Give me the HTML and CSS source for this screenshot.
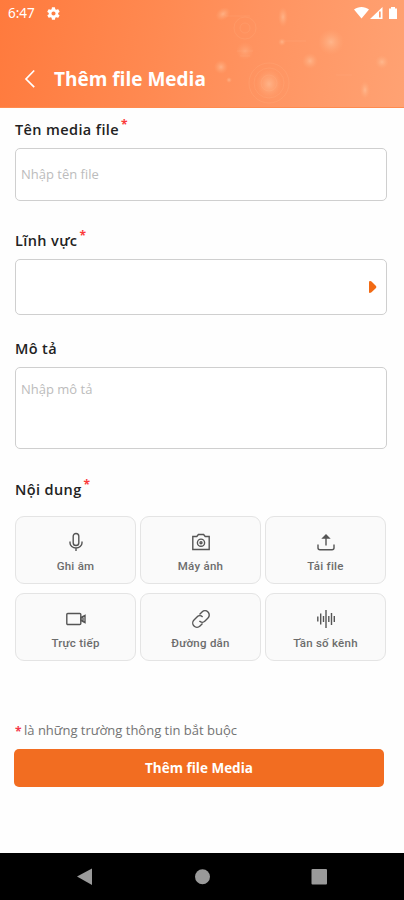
FILE: index.html
```
<!DOCTYPE html>
<html lang="vi">
<head>
<meta charset="utf-8">
<title>Thêm file Media</title>
<link rel="stylesheet" href="styles.css">
</head>
<body>
<div class="screen">
  <header class="header">
    <svg class="header-art" viewBox="0 0 404 108" aria-hidden="true">
      <defs>
        <radialGradient id="glow"><stop offset="0" stop-color="#ffd0ac" stop-opacity=".5"/><stop offset=".45" stop-color="#ffc096" stop-opacity=".3"/><stop offset="1" stop-color="#ffb080" stop-opacity="0"/></radialGradient>
      </defs>
      <g fill="url(#glow)">
        <ellipse cx="223" cy="14" rx="8" ry="6" transform="rotate(-35 223 14)"/>
        <ellipse cx="283" cy="17" rx="5" ry="10"/>
        <circle cx="331" cy="42" r="13"/>
        <circle cx="310" cy="61" r="8"/>
        <circle cx="221" cy="67" r="7"/>
        <circle cx="382" cy="62" r="7"/>
        <ellipse cx="365" cy="90" rx="5" ry="9"/>
        <ellipse cx="269" cy="84" rx="13" ry="15"/>
        <circle cx="245" cy="51" r="9" opacity=".6"/>
        <circle cx="229" cy="80" r="3"/>
        <circle cx="282" cy="42" r="4"/>
      </g>
      <g fill="none" stroke="#ffc095" stroke-opacity=".16">
        <circle cx="245" cy="28" r="5"/><circle cx="245" cy="28" r="11"/>
        <path d="M237 51h16M240 56h10"/>
        <circle cx="269" cy="83" r="15"/><circle cx="269" cy="83" r="20"/>
        <circle cx="269" cy="83" r="8"/>
        <path d="M225 16h25M281 41h25M336 75h16"/>
      </g>
    </svg>
    <div class="status">
      <span class="clock">6:47</span>
      <svg class="gear" viewBox="0 0 24 24" width="15" height="15"><path fill="#fff" fill-rule="evenodd" d="M19.4 13a7.6 7.6 0 0 0 0-2l2.1-1.6a.5.5 0 0 0 .1-.7l-2-3.4a.5.5 0 0 0-.6-.2l-2.5 1a7 7 0 0 0-1.7-1l-.4-2.6a.5.5 0 0 0-.5-.5h-4a.5.5 0 0 0-.5.5L9 5.100a7 7 0 0 0-1.700 1l-2.500-1a.5.5 0 0 0-.6.200l-2 3.400a.5.5 0 0 0 .1.700L4.500 11a7.600 7.600 0 0 0 0 2l-2.200 1.600a.5.5 0 0 0-.1.700l2 3.400c.1.200.4.300.6.200l2.500-1a7 7 0 0 0 1.700 1l.4 2.600c0 .3.200.5.5.5h4c.3 0 .5-.2.500-.5l.4-2.600a7 7 0 0 0 1.700-1l2.500 1c.2.100.5 0 .6-.2l2-3.400a.5.5 0 0 0-.1-.7zM12 15.300a3.300 3.300 0 1 1 0-6.600 3.300 3.300 0 0 1 0 6.600z"/></svg>
      <svg class="signals" viewBox="0 0 46 16" width="46" height="16"><path fill="#fff" d="M0 4.500C4 1 11 1 15 4.500L7.500 13.500zM28.500 2v12H16zM35 3.500h2V2h4v1.500h2V14h-8z"/><path fill="#ff9868" d="M25 6.500h1.700v6H25z"/></svg>
    </div>
    <div class="title-row">
      <svg viewBox="0 0 12 20" width="12" height="20"><path d="M10.200 1.500 2 10l8.200 8.200" fill="none" stroke="#fff" stroke-width="1.700"/></svg>
      <h1>Thêm file Media</h1>
    </div>
  </header>

  <main class="form">
    <div class="label label-name"><span>Tên media file</span><i>*</i></div>
    <div class="field field-name">Nhập tên file</div>
    <div class="label label-area"><span>Lĩnh vực</span><i>*</i></div>
    <div class="field field-select"><svg viewBox="0 0 9 14" width="9" height="14"><path d="M1 2.200Q1 .8 2.300 1L3.500 1.600 8 6Q8.800 7 8 8L3.500 12.300Q1 13.600 1 12z" fill="#f26a14"/></svg></div>
    <div class="label label-desc"><span>Mô tả</span></div>
    <div class="field field-desc">Nhập mô tả</div>
    <div class="label label-content"><span>Nội dung</span><i>*</i></div>

    <div class="tiles">
      <div class="tile">
        <svg viewBox="0 0 20 20"><rect x="7.200" y="1.500" width="5.600" height="12" rx="2.800"/><path d="M4 9.500v1.500a6 5 0 0 0 12 0V9.500M10 16v3"/></svg>
        <span>Ghi âm</span>
      </div>
      <div class="tile">
        <svg viewBox="0 0 20 20"><path d="M1.800 4.500h4l1.600-2h5.200l1.600 2h4v13H1.800z"/><circle cx="10" cy="10.700" r="3.600"/><circle cx="10" cy="10.700" r="1"/></svg>
        <span>Máy ảnh</span>
      </div>
      <div class="tile">
        <svg viewBox="0 0 20 20"><path d="M10 13.500V4M2 12.500V16q0 1.700 2 1.700h12q2 0 2-1.700v-3.500"/><path d="M7 6 10 3l3 3z" fill="#555"/></svg>
        <span>Tải file</span>
      </div>
      <div class="tile">
        <svg viewBox="0 0 20 20"><rect x=".8" y="4.500" width="14" height="11" rx="1"/><path d="M15 8.500 19 6.500v7l-4-2zM17 7.500v5"/></svg>
        <span>Trực tiếp</span>
      </div>
      <div class="tile">
        <svg viewBox="0 0 20 20"><path d="M8.500 5.500 11 3a4 4 0 0 1 6 6l-3 3a4 4 0 0 1-5.600.100M11.500 14.500 9 17a4 4 0 0 1-6-6l3-3a4 4 0 0 1 5.600-.1"/></svg>
        <span>Đường dẫn</span>
      </div>
      <div class="tile">
        <svg viewBox="0 0 20 20"><path d="M1.800 7.500v5M4.700 4.500v11M7.500 7v6M10 1v18M12.800 7v6M15.500 4v12M18.300 7v6"/></svg>
        <span>Tần số kênh</span>
      </div>
    </div>

    <div class="note"><i>*</i><span>là những trường thông tin bắt buộc</span></div>
    <div class="submit">Thêm file Media</div>
  </main>

  <nav class="navbar">
    <svg viewBox="0 0 404 47" width="404" height="47"><g fill="#9a9a9a"><path d="M77 23.500 92 15.500v16.500z"/><circle cx="202.500" cy="23.700" r="7.500"/><rect x="311.500" y="16" width="15.500" height="15.500" rx="1"/></g></svg>
  </nav>
</div>
</body>
</html>
```
FILE: styles.css
```
* { box-sizing: border-box; }
body { margin: 0; background: #fefefe; font-family: "Open Sans", "Noto Sans", sans-serif; }
i { font-style: normal; }
.screen { width: 404px; height: 900px; display: flex; flex-direction: column; overflow: hidden; }

.header { position: relative; flex: none; height: 108px; background: linear-gradient(100deg, #ff7a3d 0%, #ff8a52 40%, #ff9360 62%, #ffa273 100%); border-bottom: 1px solid #ff8b4f; color: #fff; }
.header-art { position: absolute; left: 0; top: 0; width: 404px; height: 108px; }
.status { position: relative; display: flex; align-items: center; height: 26px; padding: 0 4px 0 8px; }
.clock { width: 38px; font: 13.5px/26px "Noto Sans", sans-serif; }
.signals { margin-left: auto; }
.title-row { position: relative; display: flex; align-items: center; gap: 18px; height: 28px; margin-top: 39px; padding-left: 24px; }
.title-row h1 { margin: 0; font-size: 19px; line-height: 28px; font-weight: 700; white-space: nowrap; }

.form { flex: 1; display: flex; flex-direction: column; padding: 0 17px 0 15px; }
.label { display: flex; flex: none; height: 20px; font-size: 14.5px; line-height: 20px; font-weight: 600; letter-spacing: .38px; color: #222; white-space: nowrap; }
.label i { margin: -5px 0 0 2px; font-size: 12px; line-height: 20px; font-weight: 700; color: #fb3b3b; }
.label-name { margin-top: 12px; }
.label-area { margin-top: 30px; }
.label-desc { margin-top: 24px; }
.label-content { margin-top: 31px; }

.field { flex: none; width: 372px; border: 1px solid #cfcfcf; border-radius: 5px; background: #fff; padding-left: 5px; color: #bcbcbc; font-size: 13px; }
.field-name { height: 53px; margin-top: 8px; line-height: 50px; }
.field-select { height: 56px; margin-top: 8px; display: flex; align-items: center; justify-content: flex-end; padding-right: 9px; }
.field-desc { height: 82px; margin-top: 8px; padding-top: 11px; line-height: 20px; }

.tiles { display: grid; grid-template-columns: repeat(3, 121px); gap: 9px 4px; margin-top: 16px; }
.tile { height: 68px; display: flex; flex-direction: column; align-items: center; padding-top: 15px; border: 1px solid #e4e4e4; border-radius: 9px; background: #fafafa; color: #6c6c6c; font: 500 11.500px/14px Roboto, sans-serif; letter-spacing: .25px; white-space: nowrap; }
.tile svg { width: 20px; height: 20px; margin-bottom: 7px; fill: none; stroke: #555; stroke-width: 1.400; }

.note { display: flex; height: 20px; margin-top: 59px; font-size: 13px; line-height: 20px; color: #737373; white-space: nowrap; }
.note i { width: 9px; padding-top: 2px; font-size: 12px; font-weight: 700; color: #f5394b; }
.submit { width: 370px; height: 38px; margin: 9px 0 0 -1px; border-radius: 5px; background: #f26d21; color: #fff; text-align: center; font-size: 13.500px; line-height: 38px; font-weight: 700; }

.navbar { flex: none; height: 47px; background: #000; }
.navbar svg { display: block; }
```
